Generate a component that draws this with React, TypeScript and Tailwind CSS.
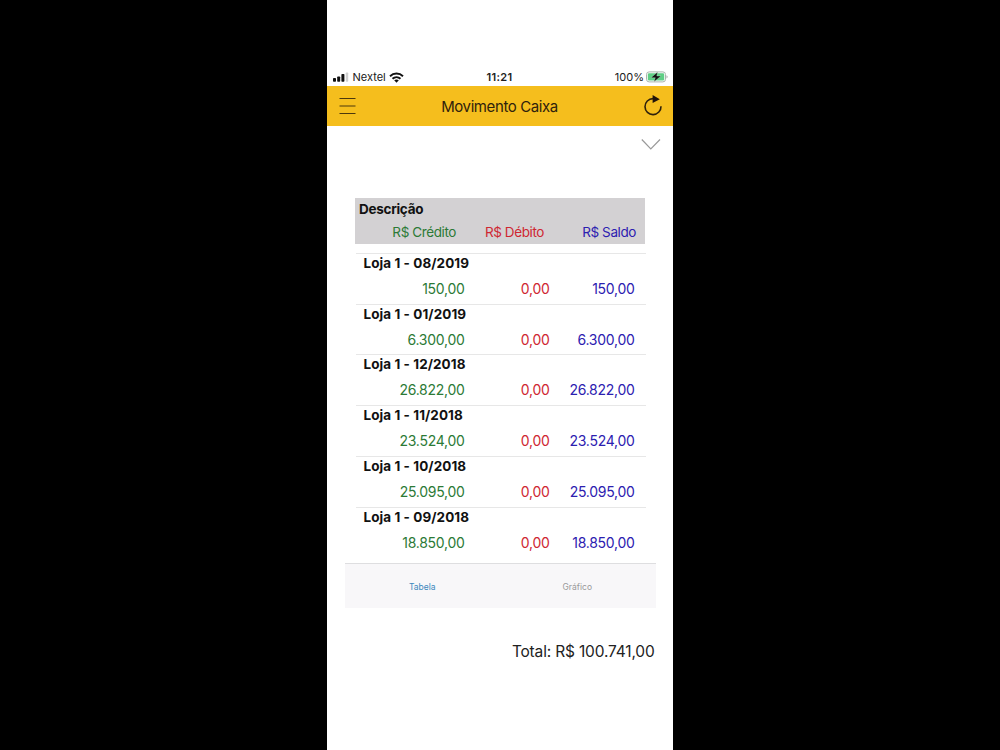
interface Movimento {
  descricao: string;
  credito: string;
  debito: string;
  saldo: string;
}

const movimentos: Movimento[] = [
  { descricao: 'Loja 1 - 08/2019', credito: '150,00', debito: '0,00', saldo: '150,00' },
  { descricao: 'Loja 1 - 01/2019', credito: '6.300,00', debito: '0,00', saldo: '6.300,00' },
  { descricao: 'Loja 1 - 12/2018', credito: '26.822,00', debito: '0,00', saldo: '26.822,00' },
  { descricao: 'Loja 1 - 11/2018', credito: '23.524,00', debito: '0,00', saldo: '23.524,00' },
  { descricao: 'Loja 1 - 10/2018', credito: '25.095,00', debito: '0,00', saldo: '25.095,00' },
  { descricao: 'Loja 1 - 09/2018', credito: '18.850,00', debito: '0,00', saldo: '18.850,00' },
];

function StatusBar() {
  return (
    <div className="grid grid-cols-3 items-center h-[17px] pl-1.5 pr-[5px] text-[11px] text-[#202020]">
      <div className="flex items-center">
        <svg width="16" height="12" viewBox="0 0 16 12" fill="#111">
          <rect x="0" y="6" width="3" height="3.7" rx="0.7" />
          <rect x="4.2" y="4.6" width="3" height="5.1" rx="0.7" />
          <rect x="8.4" y="2" width="3" height="7.7" rx="0.7" />
          <rect x="12.8" y="0.5" width="2.4" height="9.2" rx="0.7" fill="#d0d0d0" />
        </svg>
        <span className="ml-[3.5px]">Nextel</span>
        <svg className="ml-[3px] mb-px" width="15" height="11" viewBox="0 0 15 11" fill="none" stroke="#111" strokeWidth="1.9">
          <path d="M1 4.2C4.7 0.6 10.3 0.6 14 4.2" />
          <path d="M3.5 6.8C5.8 4.6 9.2 4.6 11.5 6.8" />
          <path d="M5.2 8.3C6.5 7.1 8.5 7.1 9.8 8.3L7.5 10.7Z" fill="#111" stroke="none" />
        </svg>
      </div>
      <span className="text-center font-semibold tracking-[0.35px] pr-0.5">11:21</span>
      <div className="flex items-center justify-end whitespace-nowrap">
        <span>100%</span>
        <svg className="ml-[2px] mb-0.5" width="22" height="12" viewBox="0 0 22 12">
          <rect x="0.5" y="0.9" width="19" height="10" rx="2.6" fill="#fff" stroke="#a9b5ac" />
          <rect x="1.8" y="2.2" width="16.4" height="7.4" rx="1.3" fill="#5fce85" />
          <path d="M20.6 4.3v3.2c1.2-.5 1.2-2.7 0-3.2z" fill="#888" />
          <path d="M11.6 1L5 6.7h4.3L8 10.8l7-5.8h-4.2z" fill="#111" stroke="#d5f3de" strokeWidth="0.3" />
        </svg>
      </div>
    </div>
  );
}

function Header() {
  return (
    <header className="flex items-center justify-between h-[40px] pl-3 pr-2.5 bg-[#f5be1d] text-[#30220c]">
      <button>
        <svg width="17" height="18" viewBox="0 0 17 18" stroke="#4d380c" strokeWidth="1.2">
          <path d="M0.5 1.5h16M0.5 9h16M0.5 16.5h16" />
        </svg>
      </button>
      <h1 className="pt-px text-[15px] leading-5 tracking-[-0.4px]">Movimento Caixa</h1>
      <button>
        <svg width="20" height="22" viewBox="0 0 20 22" fill="none">
          <path d="M12.2 3.6H10A8 8 0 1 0 18 11.3" stroke="#30220c" strokeWidth="1.6" />
          <path d="M9.6 0L16.8 4.2L9.6 8Z" fill="#20140a" />
        </svg>
      </button>
    </header>
  );
}

function Linha({ item }: { item: Movimento }) {
  return (
    <div className="h-[50.8px] border-t border-[#e7e7e7] ml-0.5 pl-[7.5px] pr-2.5 text-[14px]">
      <p className="leading-[18px] text-[13.5px] font-bold tracking-[0.07px] text-[#111]">{item.descricao}</p>
      <div className="flex pt-[7px] leading-5 text-right tracking-[-0.28px]">
        <span className="w-[101px] text-[#2c7a36]">{item.credito}</span>
        <span className="w-[85px] text-[#cf2732]">{item.debito}</span>
        <span className="w-[85px] text-[#2c20b0]">{item.saldo}</span>
      </div>
    </div>
  );
}

export default function App() {
  return (
    <div className="flex justify-center h-[750px] bg-black font-['Inter',sans-serif]">
      <div className="w-[346px] h-full bg-white pt-[69px] overflow-hidden">
        <StatusBar />
        <Header />

        <div className="flex justify-end pt-3 pr-3">
          <svg width="20" height="12" viewBox="0 0 20 12" fill="none" stroke="#999" strokeWidth="1.2">
            <path d="M0.8 1.5l9 9.4L19 1.5" />
          </svg>
        </div>

        <div className="mt-12 ml-[27px] w-[291.5px]">
          <div className="h-[46px] ml-[0.5px] mr-[0.6px] bg-[#d3d1d3] text-[13.5px] tracking-[-0.4px]">
            <p className="pl-[4.5px] pt-0.5 leading-[18px] font-bold tracking-[-0.28px] text-[#111]">Descrição</p>
            <div className="flex pt-1 leading-5 text-right">
              <span className="w-[101.5px] text-[#2c7a36]">R$ Crédito</span>
              <span className="w-[88px] text-[#cf2732]">R$ Débito</span>
              <span className="w-[92px] text-[#2c20b0]">R$ Saldo</span>
            </div>
          </div>
          <div className="mt-[8.9px]">
            {movimentos.map((item) => (
              <Linha key={item.descricao} item={item} />
            ))}
          </div>
        </div>

        <div className="mt-[5.3px] ml-[18px] mr-[17px] h-[45px] grid grid-cols-2 items-center pt-0.5 border-t border-[#dedee0] bg-[#f8f7f9] text-center text-[8.5px]">
          <span className="pr-px text-[#3d88bd]">Tabela</span>
          <span className="pr-0.5 text-[#999]">Gráfico</span>
        </div>

        <p className="mt-[33px] pr-[18.5px] text-right text-[15.5px] leading-[22px] tracking-[-0.17px] text-[#222]">
          Total: R$ 100.741,00
        </p>
      </div>
    </div>
  );
}
